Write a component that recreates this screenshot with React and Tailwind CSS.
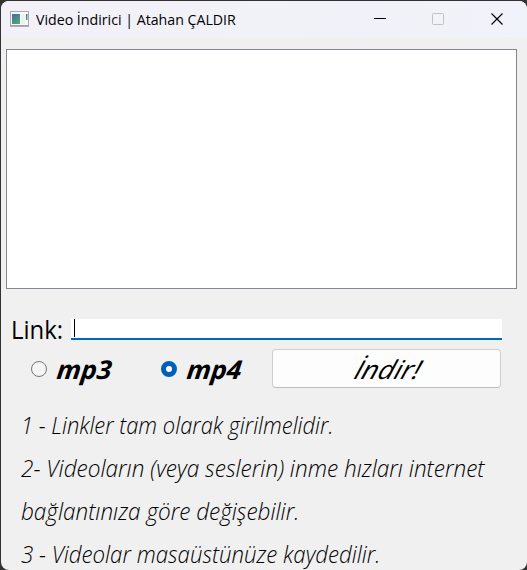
function AppIcon() {
  return (
    <svg width="19" height="16" viewBox="0 0 19 16" className="shrink-0">
      <defs>
        <linearGradient id="pane" x1="0" y1="0" x2="0.6" y2="1">
          <stop offset="0" stopColor="#4669a4" />
          <stop offset="1" stopColor="#4da574" />
        </linearGradient>
      </defs>
      <rect x="0.5" y="0.5" width="18" height="14" fill="#f8f9fa" stroke="#a5a8ac" />
      <path d="M0 15.2H19" stroke="#8d9094" />
      <rect x="2" y="3" width="8" height="10" fill="url(#pane)" />
      <rect x="11" y="3" width="4" height="10" fill="#edf0ee" />
      <rect x="16" y="3" width="1.5" height="6" fill="url(#pane)" />
    </svg>
  );
}

function TitleBar() {
  return (
    <header className="flex h-9 shrink-0 items-center bg-gradient-to-r from-[#f3f0f8] to-[#f0f3f9] pl-[9px]">
      <AppIcon />
      <h1 className="ml-[7px] w-[320px] origin-left scale-x-[0.945] text-[15px] leading-5 whitespace-nowrap text-black">
        Video İndirici | Atahan ÇALDIR
      </h1>
      <svg width="132" height="14" viewBox="0 0 132 14" fill="none" className="ml-[17px] shrink-0">
        <path d="M1 6.5H13" stroke="#000" />
        <rect x="59.5" y="1.5" width="11" height="11" rx="1" stroke="#c3c1c8" />
        <path d="M118.5 1.5L129.5 12.5M129.5 1.5L118.5 12.5" stroke="#000" strokeWidth="1.2" />
      </svg>
    </header>
  );
}

function Option({ label, checked }) {
  return (
    <label className="flex w-[130px] items-center">
      <span
        className={
          checked
            ? "size-4 rounded-full border-[5px] border-[#005fb8] bg-white"
            : "size-4 rounded-full border border-[#777] bg-[#f5f5f5]"
        }
      />
      <span className="ml-[10px] origin-left scale-x-[1.03] -skew-x-6 text-[26px] leading-8 font-bold italic">
        {label}
      </span>
    </label>
  );
}

export default function App() {
  return (
    <div className="h-[570px] w-[527px] overflow-hidden bg-[#343133] pt-px pl-px font-['Open_Sans','Noto_Sans',sans-serif] text-black">
      <main className="flex h-[569px] flex-col overflow-hidden rounded-lg bg-[#f0f0f0]">
        <TitleBar />
        <section className="mt-3 ml-[5px] h-[240px] w-[511px] shrink-0 border border-[#828790] bg-white" />
        <div className="mt-[29px] flex h-[22px] shrink-0 items-center pl-[10px]">
          <span className="w-[60px] shrink-0 origin-left scale-x-[0.92] text-[26px] leading-8">Link:</span>
          <div className="flex h-[21px] w-[431px] border-b-2 border-[#0067c0] bg-white pl-[3px]">
            <span className="h-[18px] w-px bg-black" />
          </div>
        </div>
        <div className="mt-[9px] flex h-[39px] shrink-0 items-center pl-[30px]">
          <Option label="mp3" />
          <Option label="mp4" checked />
          <button className="-ml-[19px] flex h-[39px] w-[229px] items-center justify-center rounded border border-[#d0d0d0] border-b-[#bcbcbc] bg-[#fdfdfd]">
            <span className="ml-1 scale-x-[1.08] -skew-x-[16deg] text-[26px] leading-8 font-medium italic">İndir!</span>
          </button>
        </div>
        <div className="mt-[15px] ml-[20px] text-[24px] leading-[43px] font-light whitespace-nowrap italic">
          <p className="w-max origin-left scale-x-[0.914]">1 - Linkler tam olarak girilmelidir.</p>
          <p className="w-max origin-left scale-x-[0.94]">2- Videoların (veya seslerin) inme hızları internet</p>
          <p className="w-max origin-left scale-x-[0.938]">bağlantınıza göre değişebilir.</p>
          <p className="w-max origin-left scale-x-[0.927]">3 - Videolar masaüstünüze kaydedilir.</p>
        </div>
      </main>
    </div>
  );
}
